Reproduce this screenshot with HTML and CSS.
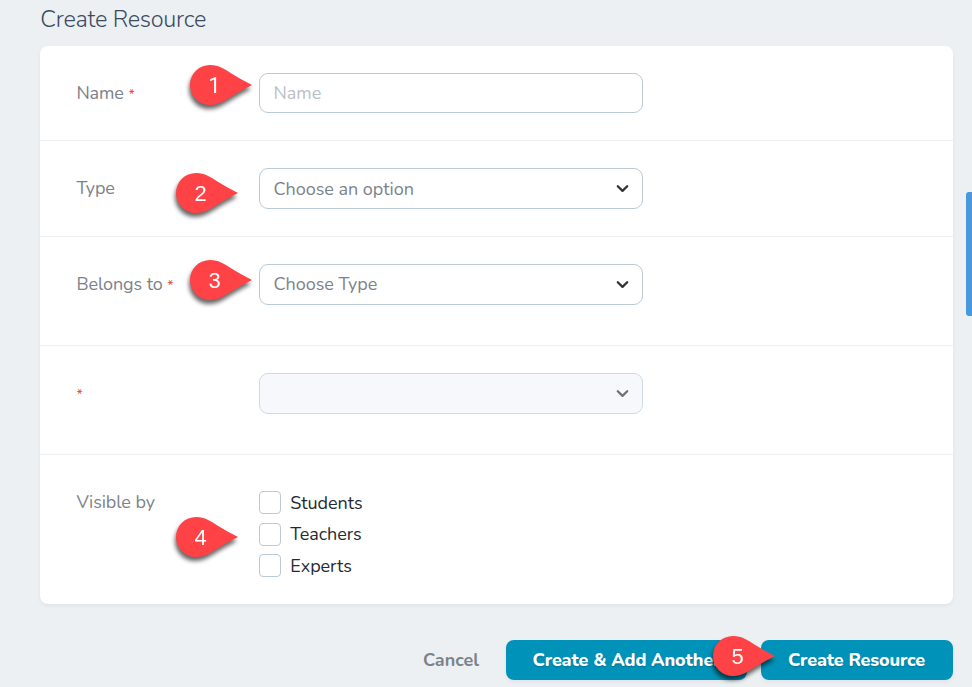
FILE: index.html
```html
<!DOCTYPE html>
<html lang="en">
<head>
<meta charset="utf-8">
<title>Create Resource</title>
<link rel="stylesheet" href="styles.css">
</head>
<body>
<svg class="defs" width="0" height="0" aria-hidden="true">
  <symbol id="pin" viewBox="0 0 62 40"><path d="M20 0C29 0 35 4.500 41 8.200Q51 14.500 62 20Q51 25.500 41 31.800C35 35.500 29 40 20 40A20 20 0 0 1 20 0Z" fill="#ff4245"/></symbol>
  <symbol id="chevron" viewBox="0 0 13 9"><path d="M1.800 2.300 6.500 6.900 11.200 2.300" fill="none" stroke="currentColor" stroke-width="2.300" stroke-linecap="round" stroke-linejoin="round"/></symbol>
</svg>
<main class="page">
  <h1 class="title">Create Resource</h1>
  <form class="card">
    <div class="row row-name">
      <label class="label">Name <span class="required">*</span></label>
      <div class="field field-text"><span class="placeholder">Name</span></div>
      <div class="pin pin-1"><svg><use href="#pin"/></svg><span>1</span></div>
    </div>
    <div class="row row-type">
      <label class="label">Type</label>
      <div class="field"><span>Choose an option</span><svg class="chevron"><use href="#chevron"/></svg></div>
      <div class="pin pin-2"><svg><use href="#pin"/></svg><span>2</span></div>
    </div>
    <div class="row row-tall">
      <label class="label">Belongs to <span class="required">*</span></label>
      <div class="field"><span class="raised">Choose Type</span><svg class="chevron"><use href="#chevron"/></svg></div>
      <div class="pin pin-3"><svg><use href="#pin"/></svg><span>3</span></div>
    </div>
    <div class="row row-tall">
      <label class="label"><span class="required">*</span></label>
      <div class="field field-disabled"><svg class="chevron"><use href="#chevron"/></svg></div>
    </div>
    <div class="row row-visible">
      <label class="label">Visible by</label>
      <div class="checks">
        <label class="check"><span class="box"></span><span>Students</span></label>
        <label class="check"><span class="box"></span><span>Teachers</span></label>
        <label class="check"><span class="box"></span><span>Experts</span></label>
      </div>
      <div class="pin pin-4"><svg><use href="#pin"/></svg><span>4</span></div>
    </div>
  </form>
  <div class="actions">
    <a class="cancel">Cancel</a>
    <button class="btn btn-another" type="button">Create &amp; Add Another</button>
    <button class="btn btn-create" type="button">Create Resource</button>
    <div class="pin pin-5"><svg><use href="#pin"/></svg><span>5</span></div>
  </div>
</main>
<div class="side-tab"></div>
</body>
</html>
```
FILE: styles.css
```css
* { box-sizing: border-box; }
html, body { height: 100%; overflow: hidden; }
body {
  margin: 0;
  background: #ecf0f3;
  font: 18px/24px Nunito, Lato, "Open Sans", sans-serif;
  color: #7c828a;
}
.defs { position: absolute; }
.page { width: 913px; margin-left: 40px; }
.title {
  margin: 0;
  height: 46px;
  padding: 4px 0 0 .3px;
  font-size: 23.5px;
  line-height: 30px;
  font-weight: 360;
  color: #3c4b5f;
  letter-spacing: -.28px;
  white-space: nowrap;
}
.card {
  height: 558px;
  background: #fff;
  border-radius: 8px;
  box-shadow: 0 2px 4px rgba(0, 0, 0, .05);
}
.row {
  position: relative;
  display: flex;
  align-items: flex-start;
  padding: 27px 0 0 36px;
  border-bottom: 1px solid #edf0f2;
}
.row-name { height: 95px; }
.row-type { height: 96px; }
.row-tall { height: 109px; }
.row-visible { height: 149px; border-bottom: 0; }
.label {
  width: 183px;
  padding: 8px 0 0 .4px;
  letter-spacing: -.1px;
  white-space: nowrap;
}
.required { font-size: 14px; color: #e74444; }
.field {
  display: flex;
  align-items: center;
  justify-content: space-between;
  width: 384px;
  height: 41px;
  padding: 0 13px;
  border: 1px solid #bacad6;
  border-radius: 9px;
  background: #fff;
}
.field > span { margin-left: .5px; letter-spacing: -.03px; }
.field-text { height: 40px; }
.field-disabled { background: #f6f8fc; border-color: #cfdbe2; justify-content: flex-end; }
.placeholder { color: #bdc0c4; }
.raised { padding-bottom: 2px; }
.chevron { width: 13px; height: 9px; color: #303236; }
.field-disabled .chevron { color: #707276; }
.checks { display: flex; flex-direction: column; gap: 8.5px; padding-top: 9px; }
.check { display: flex; align-items: center; gap: 9.3px; height: 23px; color: #242a31; letter-spacing: -.05px; }
.box { width: 22px; height: 23px; border: 1px solid #bacad6; border-radius: 4px; background: #fff; }
.actions {
  position: relative;
  display: flex;
  justify-content: flex-end;
  align-items: center;
  height: 40px;
  margin-top: 36px;
  white-space: nowrap;
}
.cancel { margin-right: 27px; font-weight: 700; color: #7c828a; }
.btn {
  height: 40px;
  padding: 0;
  border: 0;
  border-radius: 8px;
  background: #0092b9;
  color: #fff;
  font: inherit;
  font-weight: 850;
  letter-spacing: -.15px;
  text-shadow: 0 1px 2px rgba(0, 0, 0, .2);
  box-shadow: 0 2px 4px rgba(0, 0, 0, .05);
}
.btn-another { width: 241px; margin-right: 14px; }
.btn-create { width: 192px; padding-right: 1px; }
.pin {
  position: absolute;
  width: 62px;
  height: 40px;
  filter: drop-shadow(-1px 4px 2px rgba(0, 0, 0, .6));
}
.pin svg { display: block; width: 62px; height: 40px; }
.pin span {
  position: absolute;
  left: 0;
  top: 0;
  width: 49px;
  text-align: center;
  font: 22px/41px "Liberation Sans", sans-serif;
  color: #fff;
}
.pin-1 { left: 150px; top: 19px; }
.pin-1 span { font-family: Roboto, sans-serif; }
.pin-2 { left: 136px; top: 32px; }
.pin-3 { left: 150px; top: 23px; }
.pin-4 { left: 136px; top: 62px; }
.pin-5 { left: 673px; top: -4px; }
.side-tab {
  position: absolute;
  right: 0;
  top: 192px;
  width: 6px;
  height: 124px;
  border-radius: 3px 0 0 3px;
  background: #4799dc;
}
```
